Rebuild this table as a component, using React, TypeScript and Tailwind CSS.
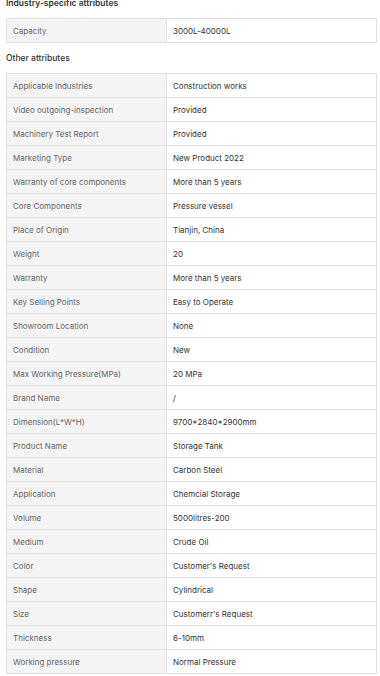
import React from "react";

const other: [string, string][] = [
  ["Applicable Industries", "Construction works"],
  ["Video outgoing-inspection", "Provided"],
  ["Machinery Test Report", "Provided"],
  ["Marketing Type", "New Product 2022"],
  ["Warranty of core components", "More than 5 years"],
  ["Core Components", "Pressure vessel"],
  ["Place of Origin", "Tianjin, China"],
  ["Weight", "20"],
  ["Warranty", "More than 5 years"],
  ["Key Selling Points", "Easy to Operate"],
  ["Showroom Location", "None"],
  ["Condition", "New"],
  ["Max Working Pressure(MPa)", "20 MPa"],
  ["Brand Name", "/"],
  ["Dimension(L*W*H)", "9700*2840*2900mm"],
  ["Product Name", "Storage Tank"],
  ["Material", "Carbon Steel"],
  ["Application", "Chemcial Storage"],
  ["Volume", "5000litres-200"],
  ["Medium", "Crude Oil"],
  ["Color", "Customer's Request"],
  ["Shape", "Cylindrical"],
  ["Size", "Customerr's Request"],
  ["Thickness", "6-10mm"],
  ["Working pressure", "Normal Pressure"],
];

function Table({ rows }: { rows: [string, string][] }) {
  return (
    <div className="border border-[#e0e0e0] border-b-0">
      {rows.map(([k, v]) => (
        <div key={k} className="flex h-[24px] border-b border-[#e0e0e0]">
          <div className="w-[160px] shrink-0 bg-[#f4f4f4] border-r border-[#e0e0e0] pl-[6px] flex items-center text-[#666] text-[8px]">
            {k}
          </div>
          <div className="flex-1 pl-[6px] flex items-center text-[#333] text-[8px]">
            {v}
          </div>
        </div>
      ))}
    </div>
  );
}

export default function App() {
  return (
    <div
      className="bg-white w-[380px] h-[676px] overflow-hidden pl-[6px] pr-[3px]"
      style={{ fontFamily: "Inter, 'Noto Sans', sans-serif" }}
    >
      <div className="-mt-[3px] h-[12px] leading-[12px] text-[8.5px] font-semibold text-[#333] mb-[9px]">
        Industry-specific attributes
      </div>
      <Table rows={[["Capacity", "3000L-40000L"]]} />
      <div className="mt-[9px] h-[12px] leading-[12px] text-[8.5px] font-medium text-[#333] mb-[9px]">
        Other attributes
      </div>
      <Table rows={other} />
    </div>
  );
}
